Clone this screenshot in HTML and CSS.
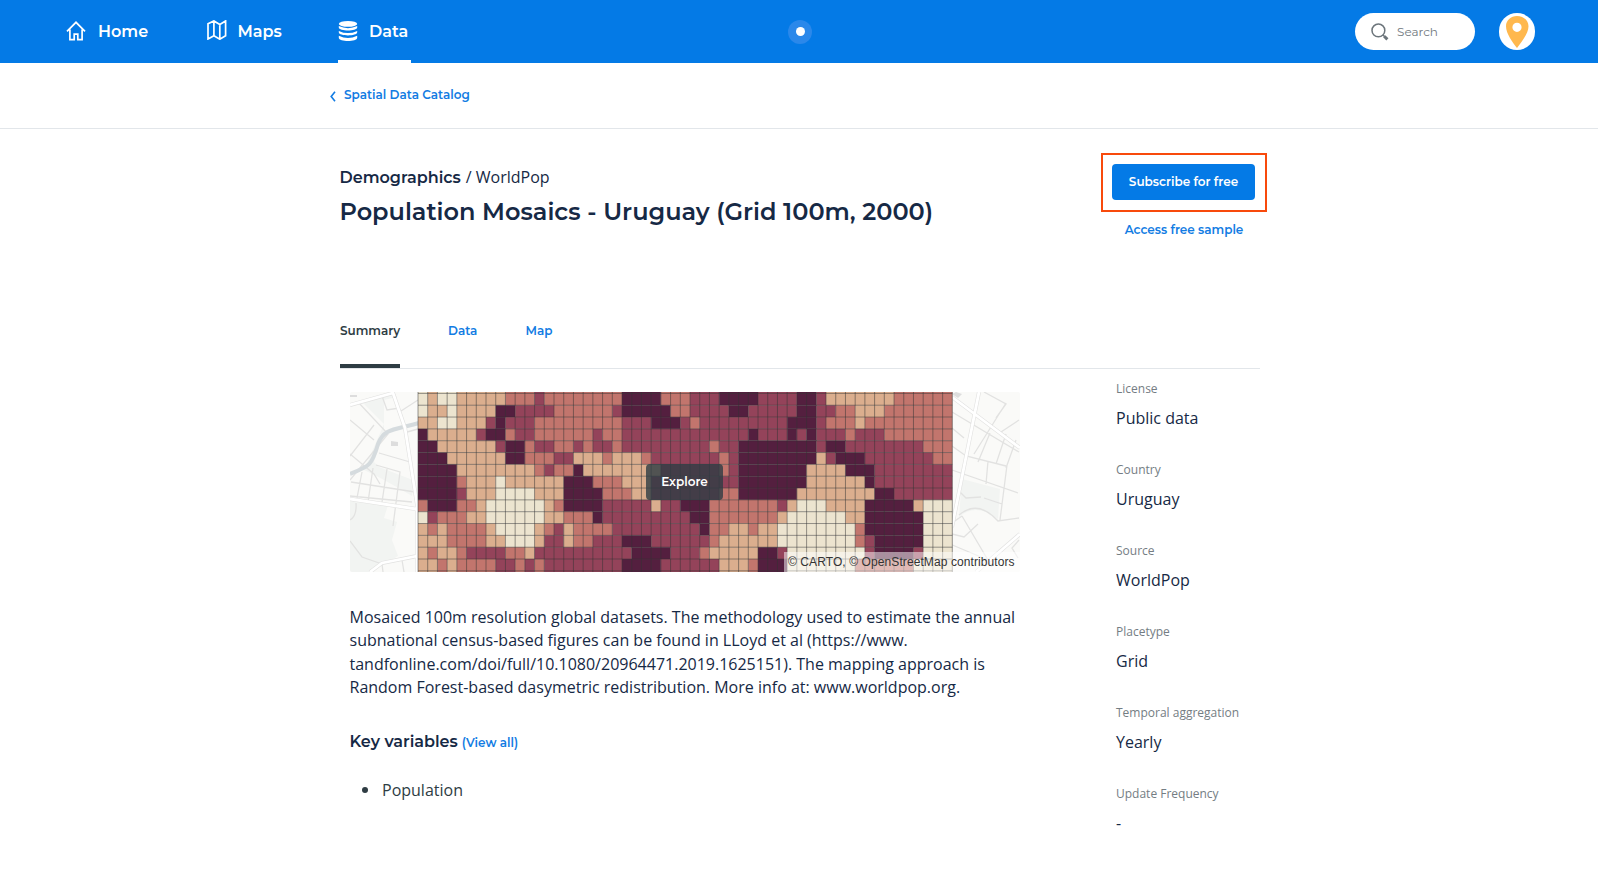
FILE: index.html
```html
<!DOCTYPE html>
<html lang="en">
<head>
<meta charset="utf-8">
<title>Population Mosaics - Uruguay</title>
<link rel="stylesheet" href="styles.css">
</head>
<body>
<header class="topbar">
  <nav class="nav">
    <a class="nav-item nav-home"><svg class="nav-icon" viewBox="0 0 20 20"><path d="M1 10.4 10 1.3l9 9.1M3.9 8.6v10.1h4.3v-5.5h3.6v5.5h4.3V8.6"/></svg><span>Home</span></a>
    <a class="nav-item nav-maps"><svg class="nav-icon" viewBox="0 0 20 20"><path d="M1 3.8 6.9.9l5.900 3.500L18.600.9v14.800l-5.800 3.500-5.900-3.500L1 19V3.800ZM6.900.9v14.800M12.800 4.400v14.800"/></svg><span>Maps</span></a>
    <a class="nav-item nav-data"><svg class="nav-icon nav-icon-solid" viewBox="0 0 20 20"><ellipse cx="10" cy="2.900" rx="9.200" ry="2.900"/><path d="M.8 5.100q9.200 4.200 18.400 0v1.500c0 4-18.400 4-18.400 0ZM.8 9.900q9.200 4.400 18.400 0v1.400c0 4.200-18.400 4.200-18.400 0ZM.8 14.700q9.200 4.500 18.400 0v2c0 4.400-18.400 4.400-18.400 0Z"/></svg><span>Data</span></a>
  </nav>
  <div class="halo"><i></i></div>
  <div class="account">
    <div class="search"><svg viewBox="0 0 18 18"><circle cx="7.400" cy="7.400" r="6.400"/><path class="handle" d="m13.200 13.200 3.200 3.200"/><path d="m11.800 11.800 2 2"/></svg><span>Search</span></div>
    <svg class="avatar" viewBox="0 0 36 37"><rect width="36" height="37" rx="18" fill="#fff"/><path fill="#ffb84d" fill-rule="evenodd" d="M18 3C11.800 3 7 7.400 7 13.200 7 20.500 13.500 29 18 35c4.500-6 11.500-14.500 11.500-21.800C29.500 7.400 24.200 3 18 3Zm0 6.700a4.600 4.600 0 1 1 0 9.200 4.600 4.600 0 0 1 0-9.200Z"/></svg>
  </div>
</header>

<div class="crumbs"><svg viewBox="0 0 6 11"><path d="M5 .8 1.200 5.500 5 10.200"/></svg><a>Spatial Data Catalog</a></div>

<main class="page">
  <section class="hero">
    <div class="heading">
      <p class="category"><b>Demographics</b><span>/ WorldPop</span></p>
      <h1>Population Mosaics - Uruguay (Grid 100m, 2000)</h1>
    </div>
    <div class="actions">
      <div class="highlight"><button class="subscribe">Subscribe for free</button></div>
      <a class="sample">Access free sample</a>
    </div>
  </section>

  <nav class="tabs"><a class="tab active">Summary</a><a class="tab tab-data">Data</a><a class="tab tab-map">Map</a></nav>

  <div class="columns">
    <article class="content">
      <div class="map">
        <svg class="map-art" viewBox="0 0 670 180">
          <rect width="670" height="180" fill="#fafaf8"/>
          <path fill="#f2f4f2" d="M12 10 44 0 68 42 62 104Q30 85 14 78L34 32ZM0 106 38 113 34 126 47 130 42 148 48 164 20 180H0ZM612 87 650 97 648 127Q626 110 609 125Z"/>
          <path fill="#fafaf8" d="M34 8 68 0V90L29 75 24 70 34 42Z"/>
          <g fill="none" stroke="#e2e2e1" stroke-width="1.300">
            <path d="M8 10 38 42 0 88M0 28 24 48M24 33 0 64M0 62 24 82 30 92M32 4 37 18 49 16M51 19 68 8M29 61 60 70M26 73 50 80 43 134M1 90 65 100M0 104 62 110M12 80 7 106M23 76 18 110M37 77 32 110M6 111Q7 124 0 128M0 149 12 165 32 172M32 172 33 180M52 168 54 180M57 40 68 37"/>
            <path d="M602 20 669 60M634 0 656 12 646 26M656 11 624 62M669 28 651 40M640 41 628 70M656 42 646 72M666 48 656 76M602 36 614 46M602 54 616 64 656 74M638 69 636 92M657 73 650 128M602 78 668 101M608 98 616 106 631 105M634 106 652 112M609 123Q628 107 648 129L669 126M612 124 642 175M602 131 612 124M602 142 614 145 628 132M600 152 638 168M669 148 662 156 668 166"/>
          </g>
          <path fill="none" stroke="#d5dbde" stroke-width="4" d="M0 82C20 74 22 73 28 52 34 36 44 38 69 31"/>
          <path fill="#ddd" d="M0 3h7v2H0ZM41 49l7 1v4h-7ZM606 0l6 2-4 4-6-4Z"/>
          <g fill="none" stroke="#e2e2e1" stroke-width="4"><path d="M0 13 43 1 55 36 67 112V180M0 107 66 117M20 180 32 171 67 164M629 0 602 135M602 5 670 56M626 180 670 142"/></g>
          <g fill="none" stroke="#fff" stroke-width="2.800"><path d="M0 13 43 1 55 36 67 112V180M0 107 66 117M20 180 32 171 67 164M629 0 602 135M602 5 670 56M626 180 670 142"/></g>
          <g id="cells"></g>
          <path id="gridlines" fill="none" stroke="#333" stroke-opacity=".5" stroke-width="1"/>
        </svg>
        <button class="explore">Explore</button>
        <small class="attribution">© CARTO, © OpenStreetMap contributors</small>
      </div>
      <p class="description">Mosaiced 100m resolution global datasets. The methodology used to estimate the annual<br>subnational census-based figures can be found in LLoyd et al (https://www.<br>tandfonline.com/doi/full/10.1080/20964471.2019.1625151). The mapping approach is<br>Random Forest-based dasymetric redistribution. More info at: www.worldpop.org.</p>
      <h2><span>Key variables</span><a>(View all)</a></h2>
      <ul class="variables"><li>Population</li></ul>
    </article>
    <dl class="facts">
      <div><dt>License</dt><dd>Public data</dd></div>
      <div><dt>Country</dt><dd>Uruguay</dd></div>
      <div><dt>Source</dt><dd>WorldPop</dd></div>
      <div><dt>Placetype</dt><dd>Grid</dd></div>
      <div><dt>Temporal aggregation</dt><dd>Yearly</dd></div>
      <div><dt>Update Frequency</dt><dd>-</dd></div>
    </dl>
  </div>
</main>
<script src="map.js"></script>
</body>
</html>
```

FILE: map.js
```js
// Each row is a run-length list: colour class followed by its cell count.
const rows = [
  'c1 t1 c2 t5 r3 m1 r8 d4 r3 m3 d4 m4 d2 m1 t7 r6',
  'c1 t2 c1 t4 d2 m4 r6 m1 d5 r2 m4 d2 m5 d2 m2 r2 t3 r7',
  't2 c2 t3 m1 d1 m3 r9 m3 d3 m1 r1 m9 d3 m1 r3 t1 r9',
  'd1 t5 m1 d2 r1 m2 r6 m1 r2 m13 d1 m3 d1 m1 d1 m3 r1 m3 r7',
  'd2 t6 m1 d2 r1 m2 r2 m1 r1 m2 r1 m9 r1 m2 d8 m1 d2 m8 r3',
  'd3 t6 d2 r3 m2 t3 r1 t3 r1 m7 r1 m1 d8 t1 m1 d3 m7 r2',
  'd4 t8 r1 m1 r2 d1 t8 m6 r1 m1 d7 t4 d3 m8',
  'd4 r1 t3 c1 t6 d3 r3 t3 m9 d7 t6 d1 m8',
  'd4 m1 t3 c4 t3 d4 r3 t2 m7 r2 d6 t8 d2 m6',
  'r1 d3 r2 t1 c6 t1 r1 d4 m5 t1 m2 d3 r7 m1 t1 c3 t4 d5 t1 c3',
  'c1 m1 r3 t2 c6 t2 r3 d1 m9 d2 r7 t1 c6 t2 d6 c3',
  't1 r1 t1 r4 t1 c4 t1 r1 m1 t1 r4 m9 d1 r2 t2 r1 t2 c8 r1 d6 c3',
  't3 r4 t2 c3 t1 m2 t1 r2 m3 d3 m6 r1 t6 c8 r1 m1 d5 c3',
  't1 r1 t2 r1 m4 r2 t1 m10 d4 m3 r1 t5 d2 m1 c8 m1 d4 m1 c3',
  't2 r1 t1 r4 m2 r1 m1 r1 m8 d4 m6 t3 r1 d3 c7 r6 c4'
];
const colors = { c: '#ece4cf', t: '#dbae8e', r: '#c2756d', m: '#94435a', d: '#541f3f' };
const left = 68, top0 = 1.4, w = 9.715, h = 11.83;
let rects = '';
rows.forEach((row, y) => {
  let x = 0;
  row.split(' ').forEach(run => {
    const n = +run.slice(1);
    const top = y ? top0 + y * h : 0;
    const bottom = y === rows.length - 1 ? 180 : top0 + (y + 1) * h;
    rects += `<rect x="${left + x * w}" y="${top}" width="${n * w}" height="${bottom - top}" fill="${colors[run[0]]}"/>`;
    x += n;
  });
});
document.getElementById('cells').innerHTML = rects;
let lines = '';
for (let i = 0; i <= 55; i++) lines += `M${left + i * w} 0V180`;
for (let j = 0; j <= 15; j++) lines += `M${left} ${top0 + j * h}H${left + 55 * w}`;
document.getElementById('gridlines').setAttribute('d', lines);
```

FILE: styles.css
```css
* { box-sizing: border-box; }
body { margin: 0; background: #fff; color: #162945; font-family: "Open Sans", sans-serif; }
p, h1, h2, ul, dl, dd { margin: 0; padding: 0; }
button { border: 0; padding: 0; }
.topbar, .crumbs a, .category b, h1, h2, .subscribe, .sample, .tabs, .explore { font-family: Montserrat, Inter, sans-serif; white-space: nowrap; }

.topbar { position: relative; height: 63px; background: #047ae6; color: #fff; display: flex; justify-content: space-between; }
.nav { display: flex; padding-left: 66px; }
.nav-item { display: flex; align-items: center; gap: 12px; height: 63px; font-size: 16px; font-weight: 600; }
.nav-icon { width: 20px; height: 20px; margin-bottom: 2px; fill: none; stroke: #fff; stroke-width: 1.7; }
.nav-icon-solid { fill: #fff; stroke: none; }
.nav-home { width: 140.500px; }
.nav-maps { width: 131.500px; gap: 11px; }
.nav-maps .nav-icon { margin-bottom: 3px; }
.nav-data { width: 73px; border-bottom: 3px solid #fff; padding-top: 3px; gap: 11px; }
.nav-data .nav-icon { margin-bottom: 1px; }
.halo { position: absolute; left: 788px; top: 20px; width: 24px; height: 24px; border-radius: 50%; background: #2b88ea; display: grid; place-items: center; }
.halo i { width: 9px; height: 9px; margin-top: -1px; border-radius: 50%; background: #fff; }
.account { display: flex; align-items: flex-start; gap: 24px; padding: 13px 63px 0 0; }
.search { width: 120px; height: 37px; border-radius: 19px; background: #fff; display: flex; align-items: center; gap: 8px; padding-left: 16px; color: #717980; font: 12px Montserrat, Inter, sans-serif; }
.search svg { width: 18px; height: 18px; fill: none; stroke: #6c757b; stroke-width: 1.5; }
.search .handle { stroke-width: 3; }
.avatar { width: 36px; height: 37px; }

.crumbs { height: 66px; border-bottom: 1px solid #e2e6ea; padding: 0 0 2px 330px; display: flex; align-items: center; gap: 8px; color: #127ce3; font-size: 12px; font-weight: 600; }
.crumbs svg { width: 6px; height: 11px; margin-top: 3px; fill: none; stroke: #127ce3; stroke-width: 1.6; }

.page { width: 920px; margin-left: 340px; }
.hero { height: 179px; display: flex; justify-content: space-between; }
.heading { padding-top: 36px; margin-left: -.5px; }
.category { display: flex; gap: 5px; font-size: 16px; line-height: 24px; }
.category b { font-weight: 600; position: relative; top: .5px; }
h1 { margin-top: 7px; font-size: 24px; line-height: 32px; font-weight: 600; }
.actions { width: 166px; margin: 24px -7px 0 0; text-align: center; }
.highlight { height: 59px; border: 2px solid #f84a0c; padding: 9px; }
.subscribe { display: block; width: 143px; height: 36px; padding-bottom: 2px; border-radius: 4px; background: #047ae6; color: #fff; font-size: 12px; font-weight: 600; }
.sample { display: block; margin-top: 9px; font-size: 12px; line-height: 18px; font-weight: 600; color: #127ce3; }

.tabs { height: 61px; border-bottom: 1px solid #e2e6ea; display: flex; gap: 48px; font-size: 12px; font-weight: 600; line-height: 18px; color: #127ce3; }
.tab { height: 60px; padding-top: 14px; }
.tab.active { width: 60px; color: #2e3c43; border-bottom: 4px solid #2e3c43; }
.tab-data { width: 29.500px; }

.columns { display: flex; }
.content { width: 670px; margin-left: 10px; padding-top: 23px; }
.map { position: relative; width: 670px; height: 180px; }
.map-art { display: block; width: 670px; height: 180px; border-radius: 2px; }
.explore { position: absolute; left: 296px; top: 72px; width: 77px; height: 36px; padding-bottom: 2px; border-radius: 4px; background: rgba(46, 60, 67, .8); color: #fff; font-size: 12px; font-weight: 600; }
.attribution { position: absolute; right: 0; bottom: 0; width: 236px; height: 20px; padding-left: 4px; background: rgba(255, 255, 255, .5); color: #333; font: 12px/21px "Liberation Sans", sans-serif; letter-spacing: .09px; white-space: nowrap; }
.description { margin: 34px 0 0 -.5px; font-size: 16px; line-height: 23.400px; white-space: nowrap; }
h2 { margin: 30px 0 0 -.5px; display: flex; align-items: baseline; gap: 4px; font-size: 16px; line-height: 24px; font-weight: 600; }
h2 a { font-size: 12px; font-weight: 600; color: #127ce3; }
.variables { margin-top: 23px; padding-left: 32px; list-style: none; font-size: 16px; line-height: 24px; color: #2e3c43; }
.variables li { position: relative; }
.variables li::before { content: ""; position: absolute; left: -20px; top: 9px; width: 6px; height: 6px; border-radius: 50%; background: #2e3c43; }
.facts { margin-left: 96px; padding-top: 10px; white-space: nowrap; }
.facts div { height: 81px; }
dt { font-size: 12px; line-height: 20px; color: #747d83; }
dd { margin-top: 7px; font-size: 16px; line-height: 24px; }
```
